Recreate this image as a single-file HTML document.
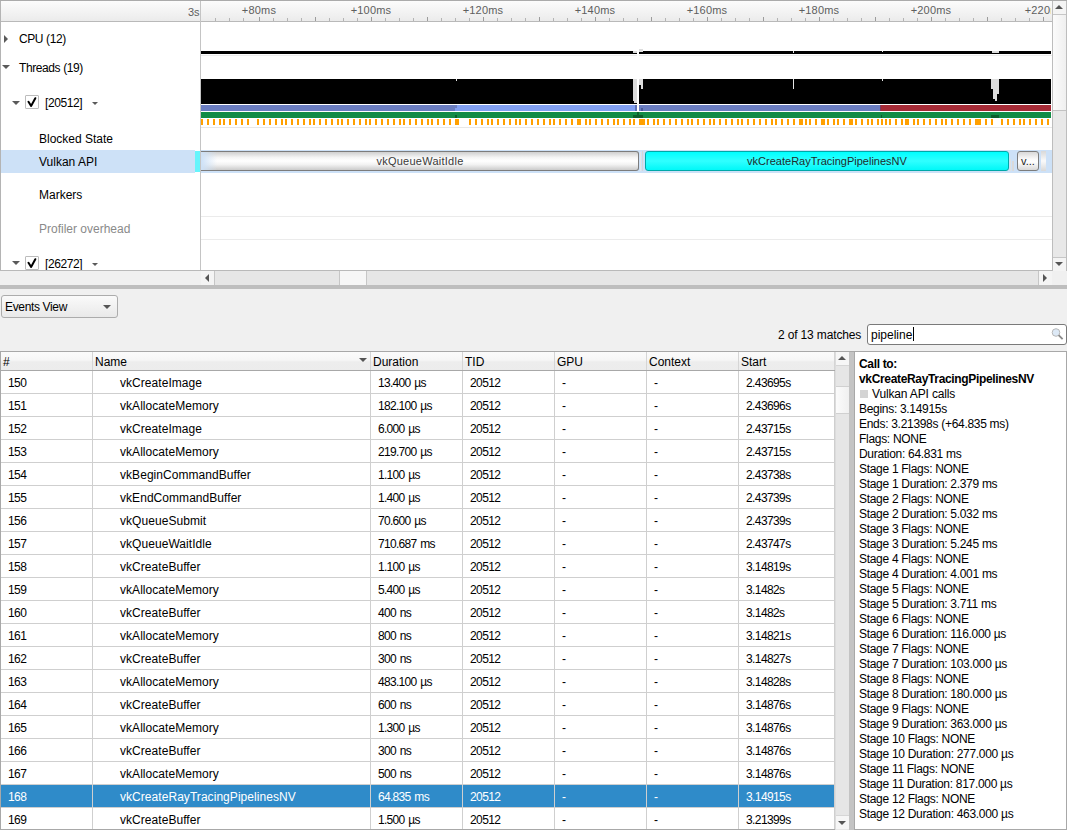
<!DOCTYPE html>
<html><head><meta charset="utf-8">
<style>
*{box-sizing:border-box;margin:0;padding:0}
html,body{width:1067px;height:830px;overflow:hidden;background:#f0f0f0;font-family:"Liberation Sans",sans-serif;font-size:12px;color:#000}
.a{position:absolute}
.t{position:absolute;white-space:nowrap;line-height:14px}
.n{letter-spacing:-0.6px}
</style></head><body>
<div class="a" style="left:0px;top:0px;width:1067px;height:1px;background:#ababab"></div>
<div class="a" style="left:0px;top:1px;width:1052px;height:20px;background:linear-gradient(#fcfcfc,#ebebeb)"></div>
<div class="a" style="left:0px;top:21px;width:1052px;height:1px;background:#b9b9b9"></div>
<div class="t" style="left:188px;top:5px;color:#5e5e5e;font-size:11px;letter-spacing:0px">3s</div>
<div class="a" style="left:215px;top:18px;width:1px;height:3px;background:#b4b4b4"></div>
<div class="a" style="left:229px;top:18px;width:1px;height:3px;background:#b4b4b4"></div>
<div class="a" style="left:243px;top:18px;width:1px;height:3px;background:#b4b4b4"></div>
<div class="a" style="left:259px;top:17px;width:1px;height:4px;background:#9c9c9c"></div>
<div class="a" style="left:273px;top:18px;width:1px;height:3px;background:#b4b4b4"></div>
<div class="a" style="left:287px;top:18px;width:1px;height:3px;background:#b4b4b4"></div>
<div class="a" style="left:301px;top:18px;width:1px;height:3px;background:#b4b4b4"></div>
<div class="a" style="left:315px;top:17px;width:1px;height:4px;background:#9c9c9c"></div>
<div class="a" style="left:329px;top:18px;width:1px;height:3px;background:#b4b4b4"></div>
<div class="a" style="left:343px;top:18px;width:1px;height:3px;background:#b4b4b4"></div>
<div class="a" style="left:357px;top:18px;width:1px;height:3px;background:#b4b4b4"></div>
<div class="a" style="left:371px;top:17px;width:1px;height:4px;background:#9c9c9c"></div>
<div class="a" style="left:385px;top:18px;width:1px;height:3px;background:#b4b4b4"></div>
<div class="a" style="left:399px;top:18px;width:1px;height:3px;background:#b4b4b4"></div>
<div class="a" style="left:413px;top:18px;width:1px;height:3px;background:#b4b4b4"></div>
<div class="a" style="left:427px;top:17px;width:1px;height:4px;background:#9c9c9c"></div>
<div class="a" style="left:441px;top:18px;width:1px;height:3px;background:#b4b4b4"></div>
<div class="a" style="left:455px;top:18px;width:1px;height:3px;background:#b4b4b4"></div>
<div class="a" style="left:469px;top:18px;width:1px;height:3px;background:#b4b4b4"></div>
<div class="a" style="left:483px;top:17px;width:1px;height:4px;background:#9c9c9c"></div>
<div class="a" style="left:497px;top:18px;width:1px;height:3px;background:#b4b4b4"></div>
<div class="a" style="left:511px;top:18px;width:1px;height:3px;background:#b4b4b4"></div>
<div class="a" style="left:525px;top:18px;width:1px;height:3px;background:#b4b4b4"></div>
<div class="a" style="left:539px;top:17px;width:1px;height:4px;background:#9c9c9c"></div>
<div class="a" style="left:553px;top:18px;width:1px;height:3px;background:#b4b4b4"></div>
<div class="a" style="left:567px;top:18px;width:1px;height:3px;background:#b4b4b4"></div>
<div class="a" style="left:581px;top:18px;width:1px;height:3px;background:#b4b4b4"></div>
<div class="a" style="left:595px;top:17px;width:1px;height:4px;background:#9c9c9c"></div>
<div class="a" style="left:609px;top:18px;width:1px;height:3px;background:#b4b4b4"></div>
<div class="a" style="left:623px;top:18px;width:1px;height:3px;background:#b4b4b4"></div>
<div class="a" style="left:637px;top:18px;width:1px;height:3px;background:#b4b4b4"></div>
<div class="a" style="left:651px;top:17px;width:1px;height:4px;background:#9c9c9c"></div>
<div class="a" style="left:665px;top:18px;width:1px;height:3px;background:#b4b4b4"></div>
<div class="a" style="left:679px;top:18px;width:1px;height:3px;background:#b4b4b4"></div>
<div class="a" style="left:693px;top:18px;width:1px;height:3px;background:#b4b4b4"></div>
<div class="a" style="left:707px;top:17px;width:1px;height:4px;background:#9c9c9c"></div>
<div class="a" style="left:721px;top:18px;width:1px;height:3px;background:#b4b4b4"></div>
<div class="a" style="left:735px;top:18px;width:1px;height:3px;background:#b4b4b4"></div>
<div class="a" style="left:749px;top:18px;width:1px;height:3px;background:#b4b4b4"></div>
<div class="a" style="left:763px;top:17px;width:1px;height:4px;background:#9c9c9c"></div>
<div class="a" style="left:777px;top:18px;width:1px;height:3px;background:#b4b4b4"></div>
<div class="a" style="left:791px;top:18px;width:1px;height:3px;background:#b4b4b4"></div>
<div class="a" style="left:805px;top:18px;width:1px;height:3px;background:#b4b4b4"></div>
<div class="a" style="left:819px;top:17px;width:1px;height:4px;background:#9c9c9c"></div>
<div class="a" style="left:833px;top:18px;width:1px;height:3px;background:#b4b4b4"></div>
<div class="a" style="left:847px;top:18px;width:1px;height:3px;background:#b4b4b4"></div>
<div class="a" style="left:861px;top:18px;width:1px;height:3px;background:#b4b4b4"></div>
<div class="a" style="left:875px;top:17px;width:1px;height:4px;background:#9c9c9c"></div>
<div class="a" style="left:889px;top:18px;width:1px;height:3px;background:#b4b4b4"></div>
<div class="a" style="left:903px;top:18px;width:1px;height:3px;background:#b4b4b4"></div>
<div class="a" style="left:917px;top:18px;width:1px;height:3px;background:#b4b4b4"></div>
<div class="a" style="left:931px;top:17px;width:1px;height:4px;background:#9c9c9c"></div>
<div class="a" style="left:945px;top:18px;width:1px;height:3px;background:#b4b4b4"></div>
<div class="a" style="left:959px;top:18px;width:1px;height:3px;background:#b4b4b4"></div>
<div class="a" style="left:973px;top:18px;width:1px;height:3px;background:#b4b4b4"></div>
<div class="a" style="left:987px;top:17px;width:1px;height:4px;background:#9c9c9c"></div>
<div class="a" style="left:1001px;top:18px;width:1px;height:3px;background:#b4b4b4"></div>
<div class="a" style="left:1015px;top:18px;width:1px;height:3px;background:#b4b4b4"></div>
<div class="a" style="left:1029px;top:18px;width:1px;height:3px;background:#b4b4b4"></div>
<div class="a" style="left:1043px;top:17px;width:1px;height:4px;background:#9c9c9c"></div>
<div class="a" style="left:201px;top:0;width:850px;height:21px;overflow:hidden">
<div class="t" style="left:-2px;top:3px;width:120px;text-align:center;color:#5e5e5e;font-size:11px;letter-spacing:0.2px">+80ms</div>
<div class="t" style="left:110px;top:3px;width:120px;text-align:center;color:#5e5e5e;font-size:11px;letter-spacing:0.2px">+100ms</div>
<div class="t" style="left:222px;top:3px;width:120px;text-align:center;color:#5e5e5e;font-size:11px;letter-spacing:0.2px">+120ms</div>
<div class="t" style="left:334px;top:3px;width:120px;text-align:center;color:#5e5e5e;font-size:11px;letter-spacing:0.2px">+140ms</div>
<div class="t" style="left:446px;top:3px;width:120px;text-align:center;color:#5e5e5e;font-size:11px;letter-spacing:0.2px">+160ms</div>
<div class="t" style="left:558px;top:3px;width:120px;text-align:center;color:#5e5e5e;font-size:11px;letter-spacing:0.2px">+180ms</div>
<div class="t" style="left:670px;top:3px;width:120px;text-align:center;color:#5e5e5e;font-size:11px;letter-spacing:0.2px">+200ms</div>
<div class="t" style="left:784px;top:3px;width:120px;text-align:center;color:#5e5e5e;font-size:11px;letter-spacing:0.2px">+220ms</div>
</div>
<div class="a" style="left:0px;top:1px;width:1px;height:270px;background:#b4b4b4"></div>
<div class="a" style="left:1px;top:22px;width:199px;height:248px;background:#fff"></div>
<div class="a" style="left:201px;top:22px;width:851px;height:248px;background:#fff"></div>
<div class="a" style="left:200px;top:1px;width:1px;height:270px;background:#c4c4c4"></div>
<div class="a" style="left:4px;top:35px;width:0;height:0;border-top:4.0px solid transparent;border-bottom:4.0px solid transparent;border-left:4px solid #5a5a5a"></div>
<div class="t" style="left:19px;top:32px;letter-spacing:-0.4px">CPU (12)</div>
<div class="a" style="left:2px;top:65px;width:0;height:0;border-left:4.0px solid transparent;border-right:4.0px solid transparent;border-top:4px solid #5a5a5a"></div>
<div class="t" style="left:19px;top:61px;letter-spacing:-0.4px">Threads (19)</div>
<div class="a" style="left:12px;top:101px;width:0;height:0;border-left:4.0px solid transparent;border-right:4.0px solid transparent;border-top:4px solid #5a5a5a"></div>
<div class="a" style="left:25px;top:95px;width:14px;height:14px;background:#fff;border:1px solid #bcbcbc;border-radius:1px"></div>
<svg class="a" style="left:27px;top:97px" width="10" height="10" viewBox="0 0 10 10"><path d="M1.5 4.8 L4.1 9 L8.3 1.2" fill="none" stroke="#000" stroke-width="2" stroke-linecap="round" stroke-linejoin="round"/></svg>
<div class="t" style="left:45px;top:96px;letter-spacing:-0.4px">[20512]</div>
<div class="a" style="left:92px;top:102px;width:0;height:0;border-left:3.0px solid transparent;border-right:3.0px solid transparent;border-top:3px solid #5a5a5a"></div>
<div class="t" style="left:39px;top:132px;">Blocked State</div>
<div class="a" style="left:1px;top:150px;width:194px;height:23px;background:#cde1f7"></div>
<div class="a" style="left:195px;top:151px;width:5px;height:21px;background:#66f4fb"></div>
<div class="t" style="left:39px;top:155px;">Vulkan API</div>
<div class="t" style="left:39px;top:188px;">Markers</div>
<div class="t" style="left:39px;top:222px;color:#8a8a8a">Profiler overhead</div>
<div class="a" style="left:12px;top:261px;width:0;height:0;border-left:4.0px solid transparent;border-right:4.0px solid transparent;border-top:4px solid #5a5a5a"></div>
<div class="a" style="left:25px;top:256px;width:14px;height:14px;background:#fff;border:1px solid #bcbcbc;border-radius:1px"></div>
<svg class="a" style="left:27px;top:258px" width="10" height="10" viewBox="0 0 10 10"><path d="M1.5 4.8 L4.1 9 L8.3 1.2" fill="none" stroke="#000" stroke-width="2" stroke-linecap="round" stroke-linejoin="round"/></svg>
<div class="t" style="left:45px;top:257px;letter-spacing:-0.4px">[26272]</div>
<div class="a" style="left:92px;top:263px;width:0;height:0;border-left:3.0px solid transparent;border-right:3.0px solid transparent;border-top:3px solid #5a5a5a"></div>
<div class="a" style="left:201px;top:55px;width:851px;height:1px;background:#ececec"></div>
<div class="a" style="left:201px;top:127px;width:851px;height:1px;background:#e8e8e8"></div>
<div class="a" style="left:201px;top:216px;width:851px;height:1px;background:#ebebeb"></div>
<div class="a" style="left:201px;top:239px;width:851px;height:1px;background:#ebebeb"></div>
<div class="a" style="left:201px;top:51px;width:850px;height:3px;background:#000"></div>
<div class="a" style="left:201px;top:79px;width:850px;height:25px;background:#000"></div>
<div class="a" style="left:633px;top:79px;width:4px;height:22px;background:#dcdcdc"></div>
<div class="a" style="left:634px;top:101px;width:3px;height:2px;background:#dcdcdc"></div>
<div class="a" style="left:639px;top:79px;width:4px;height:6px;background:#dcdcdc"></div>
<div class="a" style="left:641px;top:85px;width:2px;height:4px;background:#dcdcdc"></div>
<div class="a" style="left:633px;top:51px;width:4px;height:2px;background:#dcdcdc"></div>
<div class="a" style="left:639px;top:49px;width:4px;height:3px;background:#dcdcdc"></div>
<div class="a" style="left:793px;top:79px;width:1px;height:10px;background:#e6e6e6"></div>
<div class="a" style="left:793px;top:51px;width:1px;height:2px;background:#e6e6e6"></div>
<div class="a" style="left:882px;top:79px;width:1px;height:2px;background:#e6e6e6"></div>
<div class="a" style="left:882px;top:51px;width:1px;height:1px;background:#e6e6e6"></div>
<div class="a" style="left:991px;top:79px;width:8px;height:10px;background:#dcdcdc"></div>
<div class="a" style="left:993px;top:89px;width:6px;height:5px;background:#dcdcdc"></div>
<div class="a" style="left:993px;top:94px;width:4px;height:5px;background:#dcdcdc"></div>
<div class="a" style="left:995px;top:99px;width:2px;height:2px;background:#dcdcdc"></div>
<div class="a" style="left:992px;top:51px;width:7px;height:2px;background:#dcdcdc"></div>
<div class="a" style="left:456px;top:79px;width:1px;height:2px;background:#e6e6e6"></div>
<div class="a" style="left:201px;top:105px;width:256px;height:3px;background:#6a7dc0"></div>
<div class="a" style="left:201px;top:108px;width:254px;height:3px;background:#6a7dc0"></div>
<div class="a" style="left:457px;top:105px;width:178px;height:3px;background:#82a0f2"></div>
<div class="a" style="left:455px;top:108px;width:180px;height:3px;background:#82a0f2"></div>
<div class="a" style="left:635px;top:105px;width:2px;height:6px;background:#5d70b4"></div>
<div class="a" style="left:639px;top:105px;width:242px;height:6px;background:#6a7dc0"></div>
<div class="a" style="left:641px;top:108px;width:2px;height:3px;background:#4a5a9a"></div>
<div class="a" style="left:881px;top:105px;width:170px;height:6px;background:#a52a36"></div>
<div class="a" style="left:880px;top:105px;width:1px;height:6px;background:#7c3a60"></div>
<div class="a" style="left:201px;top:112px;width:850px;height:6px;background:#128c46"></div>
<div class="a" style="left:633px;top:115px;width:10px;height:3px;background:#0b5e2c"></div>
<div class="a" style="left:637px;top:112px;width:2px;height:3px;background:#0b5e2c"></div>
<div class="a" style="left:455px;top:115px;width:2px;height:3px;background:#0b5e2c"></div>
<div class="a" style="left:991px;top:115px;width:8px;height:3px;background:#0b5e2c"></div>
<div class="a" style="left:881px;top:115px;width:1px;height:3px;background:#0b5e2c"></div>
<div class="a" style="left:637px;top:49px;width:2px;height:63px;background:#fff"></div>
<div class="a" style="left:201px;top:119px;width:2px;height:6px;background:#ffa000"></div>
<div class="a" style="left:207px;top:119px;width:2px;height:6px;background:#ffa000"></div>
<div class="a" style="left:213px;top:119px;width:2px;height:6px;background:#ffa000"></div>
<div class="a" style="left:219px;top:119px;width:2px;height:6px;background:#ffa000"></div>
<div class="a" style="left:223px;top:119px;width:2px;height:6px;background:#ffa000"></div>
<div class="a" style="left:229px;top:119px;width:2px;height:6px;background:#ffa000"></div>
<div class="a" style="left:235px;top:119px;width:2px;height:6px;background:#ffa000"></div>
<div class="a" style="left:241px;top:119px;width:2px;height:6px;background:#ffa000"></div>
<div class="a" style="left:247px;top:119px;width:2px;height:6px;background:#ffa000"></div>
<div class="a" style="left:257px;top:119px;width:2px;height:6px;background:#ffa000"></div>
<div class="a" style="left:263px;top:119px;width:2px;height:6px;background:#ffa000"></div>
<div class="a" style="left:269px;top:119px;width:2px;height:6px;background:#ffa000"></div>
<div class="a" style="left:275px;top:119px;width:2px;height:6px;background:#ffa000"></div>
<div class="a" style="left:281px;top:119px;width:2px;height:6px;background:#ffa000"></div>
<div class="a" style="left:285px;top:119px;width:2px;height:6px;background:#ffa000"></div>
<div class="a" style="left:291px;top:119px;width:2px;height:6px;background:#ffa000"></div>
<div class="a" style="left:297px;top:119px;width:2px;height:6px;background:#ffa000"></div>
<div class="a" style="left:303px;top:119px;width:2px;height:6px;background:#ffa000"></div>
<div class="a" style="left:309px;top:119px;width:2px;height:6px;background:#ffa000"></div>
<div class="a" style="left:313px;top:119px;width:2px;height:6px;background:#ffa000"></div>
<div class="a" style="left:319px;top:119px;width:2px;height:6px;background:#ffa000"></div>
<div class="a" style="left:325px;top:119px;width:2px;height:6px;background:#ffa000"></div>
<div class="a" style="left:331px;top:119px;width:2px;height:6px;background:#ffa000"></div>
<div class="a" style="left:337px;top:119px;width:2px;height:6px;background:#ffa000"></div>
<div class="a" style="left:341px;top:119px;width:2px;height:6px;background:#ffa000"></div>
<div class="a" style="left:347px;top:119px;width:2px;height:6px;background:#ffa000"></div>
<div class="a" style="left:353px;top:119px;width:2px;height:6px;background:#ffa000"></div>
<div class="a" style="left:359px;top:119px;width:2px;height:6px;background:#ffa000"></div>
<div class="a" style="left:365px;top:119px;width:2px;height:6px;background:#ffa000"></div>
<div class="a" style="left:369px;top:119px;width:2px;height:6px;background:#ffa000"></div>
<div class="a" style="left:375px;top:119px;width:2px;height:6px;background:#ffa000"></div>
<div class="a" style="left:381px;top:119px;width:2px;height:6px;background:#ffa000"></div>
<div class="a" style="left:387px;top:119px;width:2px;height:6px;background:#ffa000"></div>
<div class="a" style="left:393px;top:119px;width:2px;height:6px;background:#ffa000"></div>
<div class="a" style="left:399px;top:119px;width:2px;height:6px;background:#ffa000"></div>
<div class="a" style="left:403px;top:119px;width:2px;height:6px;background:#ffa000"></div>
<div class="a" style="left:409px;top:119px;width:2px;height:6px;background:#ffa000"></div>
<div class="a" style="left:415px;top:119px;width:2px;height:6px;background:#ffa000"></div>
<div class="a" style="left:421px;top:119px;width:2px;height:6px;background:#ffa000"></div>
<div class="a" style="left:427px;top:119px;width:2px;height:6px;background:#ffa000"></div>
<div class="a" style="left:431px;top:119px;width:2px;height:6px;background:#ffa000"></div>
<div class="a" style="left:437px;top:119px;width:2px;height:6px;background:#ffa000"></div>
<div class="a" style="left:443px;top:119px;width:2px;height:6px;background:#ffa000"></div>
<div class="a" style="left:449px;top:119px;width:2px;height:6px;background:#ffa000"></div>
<div class="a" style="left:455px;top:119px;width:4px;height:6px;background:#ffa000"></div>
<div class="a" style="left:469px;top:119px;width:2px;height:6px;background:#ffa000"></div>
<div class="a" style="left:475px;top:119px;width:2px;height:6px;background:#ffa000"></div>
<div class="a" style="left:481px;top:119px;width:2px;height:6px;background:#ffa000"></div>
<div class="a" style="left:487px;top:119px;width:2px;height:6px;background:#ffa000"></div>
<div class="a" style="left:491px;top:119px;width:2px;height:6px;background:#ffa000"></div>
<div class="a" style="left:497px;top:119px;width:2px;height:6px;background:#ffa000"></div>
<div class="a" style="left:503px;top:119px;width:2px;height:6px;background:#ffa000"></div>
<div class="a" style="left:509px;top:119px;width:2px;height:6px;background:#ffa000"></div>
<div class="a" style="left:515px;top:119px;width:2px;height:6px;background:#ffa000"></div>
<div class="a" style="left:519px;top:119px;width:2px;height:6px;background:#ffa000"></div>
<div class="a" style="left:525px;top:119px;width:2px;height:6px;background:#ffa000"></div>
<div class="a" style="left:531px;top:119px;width:2px;height:6px;background:#ffa000"></div>
<div class="a" style="left:537px;top:119px;width:2px;height:6px;background:#ffa000"></div>
<div class="a" style="left:543px;top:119px;width:2px;height:6px;background:#ffa000"></div>
<div class="a" style="left:549px;top:119px;width:2px;height:6px;background:#ffa000"></div>
<div class="a" style="left:553px;top:119px;width:2px;height:6px;background:#ffa000"></div>
<div class="a" style="left:559px;top:119px;width:2px;height:6px;background:#ffa000"></div>
<div class="a" style="left:565px;top:119px;width:2px;height:6px;background:#ffa000"></div>
<div class="a" style="left:571px;top:119px;width:2px;height:6px;background:#ffa000"></div>
<div class="a" style="left:577px;top:119px;width:4px;height:6px;background:#ffa000"></div>
<div class="a" style="left:585px;top:119px;width:2px;height:6px;background:#ffa000"></div>
<div class="a" style="left:589px;top:119px;width:2px;height:6px;background:#ffa000"></div>
<div class="a" style="left:595px;top:119px;width:2px;height:6px;background:#ffa000"></div>
<div class="a" style="left:601px;top:119px;width:2px;height:6px;background:#ffa000"></div>
<div class="a" style="left:607px;top:119px;width:2px;height:6px;background:#ffa000"></div>
<div class="a" style="left:613px;top:119px;width:2px;height:6px;background:#ffa000"></div>
<div class="a" style="left:617px;top:119px;width:2px;height:6px;background:#ffa000"></div>
<div class="a" style="left:623px;top:119px;width:2px;height:6px;background:#ffa000"></div>
<div class="a" style="left:629px;top:119px;width:2px;height:6px;background:#ffa000"></div>
<div class="a" style="left:633px;top:119px;width:2px;height:6px;background:#ffa000"></div>
<div class="a" style="left:639px;top:119px;width:6px;height:6px;background:#ffa000"></div>
<div class="a" style="left:647px;top:119px;width:2px;height:6px;background:#ffa000"></div>
<div class="a" style="left:653px;top:119px;width:2px;height:6px;background:#ffa000"></div>
<div class="a" style="left:657px;top:119px;width:2px;height:6px;background:#ffa000"></div>
<div class="a" style="left:663px;top:119px;width:2px;height:6px;background:#ffa000"></div>
<div class="a" style="left:669px;top:119px;width:2px;height:6px;background:#ffa000"></div>
<div class="a" style="left:675px;top:119px;width:2px;height:6px;background:#ffa000"></div>
<div class="a" style="left:681px;top:119px;width:2px;height:6px;background:#ffa000"></div>
<div class="a" style="left:687px;top:119px;width:2px;height:6px;background:#ffa000"></div>
<div class="a" style="left:691px;top:119px;width:2px;height:6px;background:#ffa000"></div>
<div class="a" style="left:697px;top:119px;width:2px;height:6px;background:#ffa000"></div>
<div class="a" style="left:703px;top:119px;width:2px;height:6px;background:#ffa000"></div>
<div class="a" style="left:709px;top:119px;width:2px;height:6px;background:#ffa000"></div>
<div class="a" style="left:713px;top:119px;width:2px;height:6px;background:#ffa000"></div>
<div class="a" style="left:719px;top:119px;width:2px;height:6px;background:#ffa000"></div>
<div class="a" style="left:725px;top:119px;width:2px;height:6px;background:#ffa000"></div>
<div class="a" style="left:731px;top:119px;width:2px;height:6px;background:#ffa000"></div>
<div class="a" style="left:737px;top:119px;width:2px;height:6px;background:#ffa000"></div>
<div class="a" style="left:741px;top:119px;width:2px;height:6px;background:#ffa000"></div>
<div class="a" style="left:747px;top:119px;width:2px;height:6px;background:#ffa000"></div>
<div class="a" style="left:753px;top:119px;width:2px;height:6px;background:#ffa000"></div>
<div class="a" style="left:759px;top:119px;width:2px;height:6px;background:#ffa000"></div>
<div class="a" style="left:765px;top:119px;width:2px;height:6px;background:#ffa000"></div>
<div class="a" style="left:771px;top:119px;width:2px;height:6px;background:#ffa000"></div>
<div class="a" style="left:775px;top:119px;width:2px;height:6px;background:#ffa000"></div>
<div class="a" style="left:781px;top:119px;width:2px;height:6px;background:#ffa000"></div>
<div class="a" style="left:787px;top:119px;width:2px;height:6px;background:#ffa000"></div>
<div class="a" style="left:793px;top:119px;width:2px;height:6px;background:#ffa000"></div>
<div class="a" style="left:799px;top:119px;width:4px;height:6px;background:#ffa000"></div>
<div class="a" style="left:805px;top:119px;width:2px;height:6px;background:#ffa000"></div>
<div class="a" style="left:809px;top:119px;width:2px;height:6px;background:#ffa000"></div>
<div class="a" style="left:815px;top:119px;width:2px;height:6px;background:#ffa000"></div>
<div class="a" style="left:821px;top:119px;width:4px;height:6px;background:#ffa000"></div>
<div class="a" style="left:827px;top:119px;width:2px;height:6px;background:#ffa000"></div>
<div class="a" style="left:833px;top:119px;width:2px;height:6px;background:#ffa000"></div>
<div class="a" style="left:837px;top:119px;width:2px;height:6px;background:#ffa000"></div>
<div class="a" style="left:843px;top:119px;width:2px;height:6px;background:#ffa000"></div>
<div class="a" style="left:849px;top:119px;width:4px;height:6px;background:#ffa000"></div>
<div class="a" style="left:855px;top:119px;width:2px;height:6px;background:#ffa000"></div>
<div class="a" style="left:861px;top:119px;width:2px;height:6px;background:#ffa000"></div>
<div class="a" style="left:867px;top:119px;width:2px;height:6px;background:#ffa000"></div>
<div class="a" style="left:871px;top:119px;width:2px;height:6px;background:#ffa000"></div>
<div class="a" style="left:877px;top:119px;width:2px;height:6px;background:#ffa000"></div>
<div class="a" style="left:881px;top:119px;width:2px;height:6px;background:#ffa000"></div>
<div class="a" style="left:885px;top:119px;width:2px;height:6px;background:#ffa000"></div>
<div class="a" style="left:889px;top:119px;width:2px;height:6px;background:#ffa000"></div>
<div class="a" style="left:895px;top:119px;width:2px;height:6px;background:#ffa000"></div>
<div class="a" style="left:901px;top:119px;width:2px;height:6px;background:#ffa000"></div>
<div class="a" style="left:905px;top:119px;width:4px;height:6px;background:#ffa000"></div>
<div class="a" style="left:913px;top:119px;width:2px;height:6px;background:#ffa000"></div>
<div class="a" style="left:917px;top:119px;width:2px;height:6px;background:#ffa000"></div>
<div class="a" style="left:923px;top:119px;width:2px;height:6px;background:#ffa000"></div>
<div class="a" style="left:929px;top:119px;width:2px;height:6px;background:#ffa000"></div>
<div class="a" style="left:935px;top:119px;width:2px;height:6px;background:#ffa000"></div>
<div class="a" style="left:941px;top:119px;width:2px;height:6px;background:#ffa000"></div>
<div class="a" style="left:945px;top:119px;width:2px;height:6px;background:#ffa000"></div>
<div class="a" style="left:951px;top:119px;width:2px;height:6px;background:#ffa000"></div>
<div class="a" style="left:957px;top:119px;width:2px;height:6px;background:#ffa000"></div>
<div class="a" style="left:963px;top:119px;width:2px;height:6px;background:#ffa000"></div>
<div class="a" style="left:969px;top:119px;width:2px;height:6px;background:#ffa000"></div>
<div class="a" style="left:975px;top:119px;width:6px;height:6px;background:#ffa000"></div>
<div class="a" style="left:985px;top:119px;width:2px;height:6px;background:#ffa000"></div>
<div class="a" style="left:991px;top:119px;width:2px;height:6px;background:#ffa000"></div>
<div class="a" style="left:1001px;top:119px;width:2px;height:6px;background:#ffa000"></div>
<div class="a" style="left:1007px;top:119px;width:2px;height:6px;background:#ffa000"></div>
<div class="a" style="left:1013px;top:119px;width:2px;height:6px;background:#ffa000"></div>
<div class="a" style="left:1019px;top:119px;width:2px;height:6px;background:#ffa000"></div>
<div class="a" style="left:1023px;top:119px;width:2px;height:6px;background:#ffa000"></div>
<div class="a" style="left:1029px;top:119px;width:2px;height:6px;background:#ffa000"></div>
<div class="a" style="left:1035px;top:119px;width:2px;height:6px;background:#ffa000"></div>
<div class="a" style="left:1041px;top:119px;width:2px;height:6px;background:#ffa000"></div>
<div class="a" style="left:1047px;top:119px;width:2px;height:6px;background:#ffa000"></div>
<div class="a" style="left:201px;top:150px;width:851px;height:23px;background:#cde1f7"></div>
<div class="a" style="left:201px;top:151px;width:438px;height:20px;border:1px solid #7c7c7c;border-left:none;border-radius:0 3px 3px 0;background:linear-gradient(#cfcfcf,#f4f4f4 30%,#fff 50%,#f2f2f2 70%,#cbcbcb)"></div>
<div class="a" style="left:201px;top:152px;width:16px;height:18px;background:linear-gradient(90deg,rgba(205,225,247,1),rgba(205,225,247,0))"></div>
<div class="t" style="left:201px;top:154px;width:438px;text-align:center;font-size:11px;letter-spacing:0.25px;color:#3a3a3a">vkQueueWaitIdle</div>
<div class="a" style="left:640px;top:152px;width:1px;height:19px;background:#e6e6e6"></div>
<div class="a" style="left:642px;top:151px;width:1px;height:20px;background:#d6d6d6"></div>
<div class="a" style="left:645px;top:151px;width:364px;height:20px;border:1px solid #00a8a8;border-radius:3px;background:linear-gradient(#00ffff,#30ffff 50%,#00f8f8)"></div>
<div class="t" style="left:645px;top:154px;width:364px;text-align:center;font-size:11px;letter-spacing:0px;color:#1c2c2c">vkCreateRayTracingPipelinesNV</div>
<div class="a" style="left:1010px;top:159px;width:1px;height:12px;background:#e0e0e0"></div>
<div class="a" style="left:1012px;top:161px;width:2px;height:10px;background:#dadada"></div>
<div class="a" style="left:1017px;top:151px;width:22px;height:20px;border:1px solid #7c7c7c;border-radius:3px;background:linear-gradient(#d8d8d8,#fafafa 40%,#fff 55%,#d8d8d8)"></div>
<div class="t" style="left:1017px;top:154px;width:22px;text-align:center;font-size:11px;color:#222">v...</div>
<div class="a" style="left:1041px;top:151px;width:5px;height:20px;background:linear-gradient(#d8d8d8,#fafafa 50%,#d8d8d8)"></div>
<div class="a" style="left:0px;top:270px;width:1052px;height:1px;background:#b9b9b9"></div>
<div class="a" style="left:1052px;top:1px;width:15px;height:270px;background:#e8e8e8;border-left:1px solid #bdbdbd;border-right:1px solid #bdbdbd"></div>
<div class="a" style="left:1053px;top:1px;width:13px;height:14px;background:#f4f4f4;border-bottom:1px solid #c6c6c6"></div>
<div class="a" style="left:1055px;top:5px;width:0;height:0;border-left:4.0px solid transparent;border-right:4.0px solid transparent;border-bottom:4px solid #555"></div>
<div class="a" style="left:1053px;top:15px;width:13px;height:96px;background:linear-gradient(90deg,#fbfbfb,#efefef);border-bottom:1px solid #c2c2c2"></div>
<div class="a" style="left:1053px;top:257px;width:13px;height:14px;background:#f4f4f4;border-top:1px solid #c6c6c6"></div>
<div class="a" style="left:1055px;top:262px;width:0;height:0;border-left:4.0px solid transparent;border-right:4.0px solid transparent;border-top:4px solid #555"></div>
<div class="a" style="left:201px;top:271px;width:851px;height:14px;background:#e6e6e6"></div>
<div class="a" style="left:201px;top:271px;width:14px;height:14px;background:#f4f4f4;border-right:1px solid #c6c6c6"></div>
<div class="a" style="left:205px;top:274px;width:0;height:0;border-top:4.0px solid transparent;border-bottom:4.0px solid transparent;border-right:4px solid #555"></div>
<div class="a" style="left:339px;top:271px;width:28px;height:14px;background:#f6f6f6;border-left:1px solid #c6c6c6;border-right:1px solid #c6c6c6"></div>
<div class="a" style="left:1038px;top:271px;width:14px;height:14px;background:#f4f4f4;border-left:1px solid #c6c6c6"></div>
<div class="a" style="left:1043px;top:274px;width:0;height:0;border-top:4.0px solid transparent;border-bottom:4.0px solid transparent;border-left:4px solid #555"></div>
<div class="a" style="left:0px;top:285px;width:1067px;height:4px;background:#bebebe"></div>
<div class="a" style="left:1px;top:295px;width:117px;height:23px;border:1px solid #acacac;border-radius:3px;background:linear-gradient(#fafafa,#e9e9e9)"></div>
<div class="t" style="left:5px;top:300px;letter-spacing:-0.35px">Events View</div>
<div class="a" style="left:103px;top:305px;width:0;height:0;border-left:4.0px solid transparent;border-right:4.0px solid transparent;border-top:4px solid #555"></div>
<div class="t" style="left:778px;top:328px;letter-spacing:-0.15px">2 of 13 matches</div>
<div class="a" style="left:867px;top:324px;width:200px;height:21px;border:1px solid #7a7a7a;border-radius:3px;background:#fff"></div>
<div class="t" style="left:871px;top:328px;letter-spacing:0px">pipeline</div>
<div class="a" style="left:913px;top:327px;width:1px;height:14px;background:#000"></div>
<svg class="a" style="left:1050px;top:327px" width="14" height="14" viewBox="0 0 14 14"><circle cx="6" cy="5.5" r="3.8" fill="#dde9f6" stroke="#b8b8b8" stroke-width="1"/><path d="M8.6 8.2 L12.6 12.2" stroke="#8a8a8a" stroke-width="1.8"/></svg>
<div class="a" style="left:0px;top:351px;width:850px;height:479px;background:#fff"></div>
<div class="a" style="left:0px;top:351px;width:1067px;height:1px;background:#a8a8a8"></div>
<div class="a" style="left:0px;top:351px;width:1px;height:479px;background:#a8a8a8"></div>
<div class="a" style="left:1px;top:352px;width:834px;height:18px;background:linear-gradient(#fbfbfb,#f6f6f6 45%,#ededed 55%,#ececec)"></div>
<div class="a" style="left:0px;top:370px;width:835px;height:1px;background:#a8a8a8"></div>
<div class="t" style="left:3px;top:355px;letter-spacing:0px">#</div>
<div class="t" style="left:95px;top:355px;letter-spacing:0px">Name</div>
<div class="t" style="left:373px;top:355px;letter-spacing:0px">Duration</div>
<div class="t" style="left:465px;top:355px;letter-spacing:0px">TID</div>
<div class="t" style="left:557px;top:355px;letter-spacing:0px">GPU</div>
<div class="t" style="left:649px;top:355px;letter-spacing:0px">Context</div>
<div class="t" style="left:741px;top:355px;letter-spacing:0px">Start</div>
<div class="a" style="left:359px;top:358px;width:0;height:0;border-left:4.0px solid transparent;border-right:4.0px solid transparent;border-top:4px solid #555"></div>
<div class="a" style="left:92px;top:352px;width:1px;height:18px;background:#d5d5d5"></div>
<div class="a" style="left:370px;top:352px;width:1px;height:18px;background:#d5d5d5"></div>
<div class="a" style="left:462px;top:352px;width:1px;height:18px;background:#d5d5d5"></div>
<div class="a" style="left:554px;top:352px;width:1px;height:18px;background:#d5d5d5"></div>
<div class="a" style="left:646px;top:352px;width:1px;height:18px;background:#d5d5d5"></div>
<div class="a" style="left:738px;top:352px;width:1px;height:18px;background:#d5d5d5"></div>
<div class="a" style="left:834px;top:352px;width:1px;height:18px;background:#d5d5d5"></div>
<div class="a" style="left:1px;top:393px;width:833px;height:1px;background:#cfcfcf"></div>
<div class="t" style="left:8px;top:376px;color:#000;letter-spacing:-0.6px">150</div>
<div class="t" style="left:120px;top:376px;color:#000;letter-spacing:0.05px">vkCreateImage</div>
<div class="t" style="left:378px;top:376px;color:#000;letter-spacing:-0.7px;word-spacing:1.2px">13.400 µs</div>
<div class="t" style="left:470px;top:376px;color:#000;letter-spacing:-0.6px">20512</div>
<div class="t" style="left:562px;top:376px;color:#000">-</div>
<div class="t" style="left:654px;top:376px;color:#000">-</div>
<div class="t" style="left:746px;top:376px;color:#000;letter-spacing:-0.6px">2.43695s</div>
<div class="a" style="left:1px;top:416px;width:833px;height:1px;background:#cfcfcf"></div>
<div class="t" style="left:8px;top:399px;color:#000;letter-spacing:-0.6px">151</div>
<div class="t" style="left:120px;top:399px;color:#000;letter-spacing:0.05px">vkAllocateMemory</div>
<div class="t" style="left:378px;top:399px;color:#000;letter-spacing:-0.7px;word-spacing:1.2px">182.100 µs</div>
<div class="t" style="left:470px;top:399px;color:#000;letter-spacing:-0.6px">20512</div>
<div class="t" style="left:562px;top:399px;color:#000">-</div>
<div class="t" style="left:654px;top:399px;color:#000">-</div>
<div class="t" style="left:746px;top:399px;color:#000;letter-spacing:-0.6px">2.43696s</div>
<div class="a" style="left:1px;top:439px;width:833px;height:1px;background:#cfcfcf"></div>
<div class="t" style="left:8px;top:422px;color:#000;letter-spacing:-0.6px">152</div>
<div class="t" style="left:120px;top:422px;color:#000;letter-spacing:0.05px">vkCreateImage</div>
<div class="t" style="left:378px;top:422px;color:#000;letter-spacing:-0.7px;word-spacing:1.2px">6.000 µs</div>
<div class="t" style="left:470px;top:422px;color:#000;letter-spacing:-0.6px">20512</div>
<div class="t" style="left:562px;top:422px;color:#000">-</div>
<div class="t" style="left:654px;top:422px;color:#000">-</div>
<div class="t" style="left:746px;top:422px;color:#000;letter-spacing:-0.6px">2.43715s</div>
<div class="a" style="left:1px;top:462px;width:833px;height:1px;background:#cfcfcf"></div>
<div class="t" style="left:8px;top:445px;color:#000;letter-spacing:-0.6px">153</div>
<div class="t" style="left:120px;top:445px;color:#000;letter-spacing:0.05px">vkAllocateMemory</div>
<div class="t" style="left:378px;top:445px;color:#000;letter-spacing:-0.7px;word-spacing:1.2px">219.700 µs</div>
<div class="t" style="left:470px;top:445px;color:#000;letter-spacing:-0.6px">20512</div>
<div class="t" style="left:562px;top:445px;color:#000">-</div>
<div class="t" style="left:654px;top:445px;color:#000">-</div>
<div class="t" style="left:746px;top:445px;color:#000;letter-spacing:-0.6px">2.43715s</div>
<div class="a" style="left:1px;top:485px;width:833px;height:1px;background:#cfcfcf"></div>
<div class="t" style="left:8px;top:468px;color:#000;letter-spacing:-0.6px">154</div>
<div class="t" style="left:120px;top:468px;color:#000;letter-spacing:0.05px">vkBeginCommandBuffer</div>
<div class="t" style="left:378px;top:468px;color:#000;letter-spacing:-0.7px;word-spacing:1.2px">1.100 µs</div>
<div class="t" style="left:470px;top:468px;color:#000;letter-spacing:-0.6px">20512</div>
<div class="t" style="left:562px;top:468px;color:#000">-</div>
<div class="t" style="left:654px;top:468px;color:#000">-</div>
<div class="t" style="left:746px;top:468px;color:#000;letter-spacing:-0.6px">2.43738s</div>
<div class="a" style="left:1px;top:508px;width:833px;height:1px;background:#cfcfcf"></div>
<div class="t" style="left:8px;top:491px;color:#000;letter-spacing:-0.6px">155</div>
<div class="t" style="left:120px;top:491px;color:#000;letter-spacing:0.05px">vkEndCommandBuffer</div>
<div class="t" style="left:378px;top:491px;color:#000;letter-spacing:-0.7px;word-spacing:1.2px">1.400 µs</div>
<div class="t" style="left:470px;top:491px;color:#000;letter-spacing:-0.6px">20512</div>
<div class="t" style="left:562px;top:491px;color:#000">-</div>
<div class="t" style="left:654px;top:491px;color:#000">-</div>
<div class="t" style="left:746px;top:491px;color:#000;letter-spacing:-0.6px">2.43739s</div>
<div class="a" style="left:1px;top:531px;width:833px;height:1px;background:#cfcfcf"></div>
<div class="t" style="left:8px;top:514px;color:#000;letter-spacing:-0.6px">156</div>
<div class="t" style="left:120px;top:514px;color:#000;letter-spacing:0.05px">vkQueueSubmit</div>
<div class="t" style="left:378px;top:514px;color:#000;letter-spacing:-0.7px;word-spacing:1.2px">70.600 µs</div>
<div class="t" style="left:470px;top:514px;color:#000;letter-spacing:-0.6px">20512</div>
<div class="t" style="left:562px;top:514px;color:#000">-</div>
<div class="t" style="left:654px;top:514px;color:#000">-</div>
<div class="t" style="left:746px;top:514px;color:#000;letter-spacing:-0.6px">2.43739s</div>
<div class="a" style="left:1px;top:554px;width:833px;height:1px;background:#cfcfcf"></div>
<div class="t" style="left:8px;top:537px;color:#000;letter-spacing:-0.6px">157</div>
<div class="t" style="left:120px;top:537px;color:#000;letter-spacing:0.05px">vkQueueWaitIdle</div>
<div class="t" style="left:378px;top:537px;color:#000;letter-spacing:-0.7px;word-spacing:1.2px">710.687 ms</div>
<div class="t" style="left:470px;top:537px;color:#000;letter-spacing:-0.6px">20512</div>
<div class="t" style="left:562px;top:537px;color:#000">-</div>
<div class="t" style="left:654px;top:537px;color:#000">-</div>
<div class="t" style="left:746px;top:537px;color:#000;letter-spacing:-0.6px">2.43747s</div>
<div class="a" style="left:1px;top:577px;width:833px;height:1px;background:#cfcfcf"></div>
<div class="t" style="left:8px;top:560px;color:#000;letter-spacing:-0.6px">158</div>
<div class="t" style="left:120px;top:560px;color:#000;letter-spacing:0.05px">vkCreateBuffer</div>
<div class="t" style="left:378px;top:560px;color:#000;letter-spacing:-0.7px;word-spacing:1.2px">1.100 µs</div>
<div class="t" style="left:470px;top:560px;color:#000;letter-spacing:-0.6px">20512</div>
<div class="t" style="left:562px;top:560px;color:#000">-</div>
<div class="t" style="left:654px;top:560px;color:#000">-</div>
<div class="t" style="left:746px;top:560px;color:#000;letter-spacing:-0.6px">3.14819s</div>
<div class="a" style="left:1px;top:600px;width:833px;height:1px;background:#cfcfcf"></div>
<div class="t" style="left:8px;top:583px;color:#000;letter-spacing:-0.6px">159</div>
<div class="t" style="left:120px;top:583px;color:#000;letter-spacing:0.05px">vkAllocateMemory</div>
<div class="t" style="left:378px;top:583px;color:#000;letter-spacing:-0.7px;word-spacing:1.2px">5.400 µs</div>
<div class="t" style="left:470px;top:583px;color:#000;letter-spacing:-0.6px">20512</div>
<div class="t" style="left:562px;top:583px;color:#000">-</div>
<div class="t" style="left:654px;top:583px;color:#000">-</div>
<div class="t" style="left:746px;top:583px;color:#000;letter-spacing:-0.6px">3.1482s</div>
<div class="a" style="left:1px;top:623px;width:833px;height:1px;background:#cfcfcf"></div>
<div class="t" style="left:8px;top:606px;color:#000;letter-spacing:-0.6px">160</div>
<div class="t" style="left:120px;top:606px;color:#000;letter-spacing:0.05px">vkCreateBuffer</div>
<div class="t" style="left:378px;top:606px;color:#000;letter-spacing:-0.7px;word-spacing:1.2px">400 ns</div>
<div class="t" style="left:470px;top:606px;color:#000;letter-spacing:-0.6px">20512</div>
<div class="t" style="left:562px;top:606px;color:#000">-</div>
<div class="t" style="left:654px;top:606px;color:#000">-</div>
<div class="t" style="left:746px;top:606px;color:#000;letter-spacing:-0.6px">3.1482s</div>
<div class="a" style="left:1px;top:646px;width:833px;height:1px;background:#cfcfcf"></div>
<div class="t" style="left:8px;top:629px;color:#000;letter-spacing:-0.6px">161</div>
<div class="t" style="left:120px;top:629px;color:#000;letter-spacing:0.05px">vkAllocateMemory</div>
<div class="t" style="left:378px;top:629px;color:#000;letter-spacing:-0.7px;word-spacing:1.2px">800 ns</div>
<div class="t" style="left:470px;top:629px;color:#000;letter-spacing:-0.6px">20512</div>
<div class="t" style="left:562px;top:629px;color:#000">-</div>
<div class="t" style="left:654px;top:629px;color:#000">-</div>
<div class="t" style="left:746px;top:629px;color:#000;letter-spacing:-0.6px">3.14821s</div>
<div class="a" style="left:1px;top:669px;width:833px;height:1px;background:#cfcfcf"></div>
<div class="t" style="left:8px;top:652px;color:#000;letter-spacing:-0.6px">162</div>
<div class="t" style="left:120px;top:652px;color:#000;letter-spacing:0.05px">vkCreateBuffer</div>
<div class="t" style="left:378px;top:652px;color:#000;letter-spacing:-0.7px;word-spacing:1.2px">300 ns</div>
<div class="t" style="left:470px;top:652px;color:#000;letter-spacing:-0.6px">20512</div>
<div class="t" style="left:562px;top:652px;color:#000">-</div>
<div class="t" style="left:654px;top:652px;color:#000">-</div>
<div class="t" style="left:746px;top:652px;color:#000;letter-spacing:-0.6px">3.14827s</div>
<div class="a" style="left:1px;top:692px;width:833px;height:1px;background:#cfcfcf"></div>
<div class="t" style="left:8px;top:675px;color:#000;letter-spacing:-0.6px">163</div>
<div class="t" style="left:120px;top:675px;color:#000;letter-spacing:0.05px">vkAllocateMemory</div>
<div class="t" style="left:378px;top:675px;color:#000;letter-spacing:-0.7px;word-spacing:1.2px">483.100 µs</div>
<div class="t" style="left:470px;top:675px;color:#000;letter-spacing:-0.6px">20512</div>
<div class="t" style="left:562px;top:675px;color:#000">-</div>
<div class="t" style="left:654px;top:675px;color:#000">-</div>
<div class="t" style="left:746px;top:675px;color:#000;letter-spacing:-0.6px">3.14828s</div>
<div class="a" style="left:1px;top:715px;width:833px;height:1px;background:#cfcfcf"></div>
<div class="t" style="left:8px;top:698px;color:#000;letter-spacing:-0.6px">164</div>
<div class="t" style="left:120px;top:698px;color:#000;letter-spacing:0.05px">vkCreateBuffer</div>
<div class="t" style="left:378px;top:698px;color:#000;letter-spacing:-0.7px;word-spacing:1.2px">600 ns</div>
<div class="t" style="left:470px;top:698px;color:#000;letter-spacing:-0.6px">20512</div>
<div class="t" style="left:562px;top:698px;color:#000">-</div>
<div class="t" style="left:654px;top:698px;color:#000">-</div>
<div class="t" style="left:746px;top:698px;color:#000;letter-spacing:-0.6px">3.14876s</div>
<div class="a" style="left:1px;top:738px;width:833px;height:1px;background:#cfcfcf"></div>
<div class="t" style="left:8px;top:721px;color:#000;letter-spacing:-0.6px">165</div>
<div class="t" style="left:120px;top:721px;color:#000;letter-spacing:0.05px">vkAllocateMemory</div>
<div class="t" style="left:378px;top:721px;color:#000;letter-spacing:-0.7px;word-spacing:1.2px">1.300 µs</div>
<div class="t" style="left:470px;top:721px;color:#000;letter-spacing:-0.6px">20512</div>
<div class="t" style="left:562px;top:721px;color:#000">-</div>
<div class="t" style="left:654px;top:721px;color:#000">-</div>
<div class="t" style="left:746px;top:721px;color:#000;letter-spacing:-0.6px">3.14876s</div>
<div class="a" style="left:1px;top:761px;width:833px;height:1px;background:#cfcfcf"></div>
<div class="t" style="left:8px;top:744px;color:#000;letter-spacing:-0.6px">166</div>
<div class="t" style="left:120px;top:744px;color:#000;letter-spacing:0.05px">vkCreateBuffer</div>
<div class="t" style="left:378px;top:744px;color:#000;letter-spacing:-0.7px;word-spacing:1.2px">300 ns</div>
<div class="t" style="left:470px;top:744px;color:#000;letter-spacing:-0.6px">20512</div>
<div class="t" style="left:562px;top:744px;color:#000">-</div>
<div class="t" style="left:654px;top:744px;color:#000">-</div>
<div class="t" style="left:746px;top:744px;color:#000;letter-spacing:-0.6px">3.14876s</div>
<div class="a" style="left:1px;top:784px;width:833px;height:1px;background:#cfcfcf"></div>
<div class="t" style="left:8px;top:767px;color:#000;letter-spacing:-0.6px">167</div>
<div class="t" style="left:120px;top:767px;color:#000;letter-spacing:0.05px">vkAllocateMemory</div>
<div class="t" style="left:378px;top:767px;color:#000;letter-spacing:-0.7px;word-spacing:1.2px">500 ns</div>
<div class="t" style="left:470px;top:767px;color:#000;letter-spacing:-0.6px">20512</div>
<div class="t" style="left:562px;top:767px;color:#000">-</div>
<div class="t" style="left:654px;top:767px;color:#000">-</div>
<div class="t" style="left:746px;top:767px;color:#000;letter-spacing:-0.6px">3.14876s</div>
<div class="a" style="left:1px;top:785px;width:833px;height:22px;background:#2f8bc9"></div>
<div class="a" style="left:1px;top:807px;width:833px;height:1px;background:#cfcfcf"></div>
<div class="t" style="left:8px;top:790px;color:#fff;letter-spacing:-0.6px">168</div>
<div class="t" style="left:120px;top:790px;color:#fff;letter-spacing:0.05px">vkCreateRayTracingPipelinesNV</div>
<div class="t" style="left:378px;top:790px;color:#fff;letter-spacing:-0.7px;word-spacing:1.2px">64.835 ms</div>
<div class="t" style="left:470px;top:790px;color:#fff;letter-spacing:-0.6px">20512</div>
<div class="t" style="left:562px;top:790px;color:#fff">-</div>
<div class="t" style="left:654px;top:790px;color:#fff">-</div>
<div class="t" style="left:746px;top:790px;color:#fff;letter-spacing:-0.6px">3.14915s</div>
<div class="a" style="left:1px;top:830px;width:833px;height:1px;background:#cfcfcf"></div>
<div class="t" style="left:8px;top:813px;color:#000;letter-spacing:-0.6px">169</div>
<div class="t" style="left:120px;top:813px;color:#000;letter-spacing:0.05px">vkCreateBuffer</div>
<div class="t" style="left:378px;top:813px;color:#000;letter-spacing:-0.7px;word-spacing:1.2px">1.500 µs</div>
<div class="t" style="left:470px;top:813px;color:#000;letter-spacing:-0.6px">20512</div>
<div class="t" style="left:562px;top:813px;color:#000">-</div>
<div class="t" style="left:654px;top:813px;color:#000">-</div>
<div class="t" style="left:746px;top:813px;color:#000;letter-spacing:-0.6px">3.21399s</div>
<div class="a" style="left:92px;top:371px;width:1px;height:459px;background:#cfcfcf"></div>
<div class="a" style="left:370px;top:371px;width:1px;height:459px;background:#cfcfcf"></div>
<div class="a" style="left:462px;top:371px;width:1px;height:459px;background:#cfcfcf"></div>
<div class="a" style="left:554px;top:371px;width:1px;height:459px;background:#cfcfcf"></div>
<div class="a" style="left:646px;top:371px;width:1px;height:459px;background:#cfcfcf"></div>
<div class="a" style="left:738px;top:371px;width:1px;height:459px;background:#cfcfcf"></div>
<div class="a" style="left:834px;top:371px;width:1px;height:459px;background:#cfcfcf"></div>
<div class="a" style="left:0px;top:829px;width:850px;height:1px;background:#a8a8a8"></div>
<div class="a" style="left:835px;top:352px;width:14px;height:478px;background:#e6e6e6;border-left:1px solid #dcdcdc"></div>
<div class="a" style="left:836px;top:352px;width:13px;height:14px;background:#f6f6f6;border-bottom:1px solid #d6d6d6"></div>
<div class="a" style="left:838px;top:356px;width:0;height:0;border-left:4.0px solid transparent;border-right:4.0px solid transparent;border-bottom:4px solid #555"></div>
<div class="a" style="left:836px;top:386px;width:13px;height:28px;background:linear-gradient(90deg,#fbfbfb,#f0f0f0);border-top:1px solid #d0d0d0;border-bottom:1px solid #d0d0d0"></div>
<div class="a" style="left:836px;top:815px;width:13px;height:14px;background:#f6f6f6;border-top:1px solid #d6d6d6"></div>
<div class="a" style="left:838px;top:821px;width:0;height:0;border-left:4.0px solid transparent;border-right:4.0px solid transparent;border-top:4px solid #555"></div>
<div class="a" style="left:849px;top:352px;width:5px;height:478px;background:#c4c4c4"></div>
<div class="a" style="left:854px;top:351px;width:213px;height:479px;background:#fff;border:1px solid #a8a8a8"></div>
<div class="t" style="left:859px;top:357px;font-weight:bold;letter-spacing:-0.34px">Call to:</div>
<div class="t" style="left:859px;top:372px;font-weight:bold;letter-spacing:-0.34px">vkCreateRayTracingPipelinesNV</div>
<div class="a" style="left:860px;top:390px;width:8px;height:8px;background:#d4d4d4"></div>
<div class="t" style="left:872px;top:387px;letter-spacing:-0.15px">Vulkan API calls</div>
<div class="t" style="left:859px;top:402px;letter-spacing:-0.3px">Begins: 3.14915s</div>
<div class="t" style="left:859px;top:417px;letter-spacing:-0.3px">Ends: 3.21398s (+64.835 ms)</div>
<div class="t" style="left:859px;top:432px;letter-spacing:-0.3px">Flags: NONE</div>
<div class="t" style="left:859px;top:447px;letter-spacing:-0.3px">Duration: 64.831 ms</div>
<div class="t" style="left:859px;top:462px;letter-spacing:-0.3px">Stage 1 Flags: NONE</div>
<div class="t" style="left:859px;top:477px;letter-spacing:-0.3px">Stage 1 Duration: 2.379 ms</div>
<div class="t" style="left:859px;top:492px;letter-spacing:-0.3px">Stage 2 Flags: NONE</div>
<div class="t" style="left:859px;top:507px;letter-spacing:-0.3px">Stage 2 Duration: 5.032 ms</div>
<div class="t" style="left:859px;top:522px;letter-spacing:-0.3px">Stage 3 Flags: NONE</div>
<div class="t" style="left:859px;top:537px;letter-spacing:-0.3px">Stage 3 Duration: 5.245 ms</div>
<div class="t" style="left:859px;top:552px;letter-spacing:-0.3px">Stage 4 Flags: NONE</div>
<div class="t" style="left:859px;top:567px;letter-spacing:-0.3px">Stage 4 Duration: 4.001 ms</div>
<div class="t" style="left:859px;top:582px;letter-spacing:-0.3px">Stage 5 Flags: NONE</div>
<div class="t" style="left:859px;top:597px;letter-spacing:-0.3px">Stage 5 Duration: 3.711 ms</div>
<div class="t" style="left:859px;top:612px;letter-spacing:-0.3px">Stage 6 Flags: NONE</div>
<div class="t" style="left:859px;top:627px;letter-spacing:-0.3px">Stage 6 Duration: 116.000 µs</div>
<div class="t" style="left:859px;top:642px;letter-spacing:-0.3px">Stage 7 Flags: NONE</div>
<div class="t" style="left:859px;top:657px;letter-spacing:-0.3px">Stage 7 Duration: 103.000 µs</div>
<div class="t" style="left:859px;top:672px;letter-spacing:-0.3px">Stage 8 Flags: NONE</div>
<div class="t" style="left:859px;top:687px;letter-spacing:-0.3px">Stage 8 Duration: 180.000 µs</div>
<div class="t" style="left:859px;top:702px;letter-spacing:-0.3px">Stage 9 Flags: NONE</div>
<div class="t" style="left:859px;top:717px;letter-spacing:-0.3px">Stage 9 Duration: 363.000 µs</div>
<div class="t" style="left:859px;top:732px;letter-spacing:-0.3px">Stage 10 Flags: NONE</div>
<div class="t" style="left:859px;top:747px;letter-spacing:-0.3px">Stage 10 Duration: 277.000 µs</div>
<div class="t" style="left:859px;top:762px;letter-spacing:-0.3px">Stage 11 Flags: NONE</div>
<div class="t" style="left:859px;top:777px;letter-spacing:-0.3px">Stage 11 Duration: 817.000 µs</div>
<div class="t" style="left:859px;top:792px;letter-spacing:-0.3px">Stage 12 Flags: NONE</div>
<div class="t" style="left:859px;top:807px;letter-spacing:-0.3px">Stage 12 Duration: 463.000 µs</div>
</body></html>
